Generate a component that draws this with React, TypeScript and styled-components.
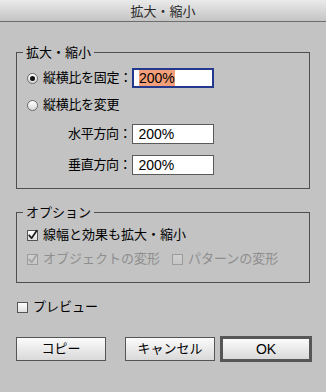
import React from "react";
import styled, { createGlobalStyle } from "styled-components";

const Global = createGlobalStyle`
  html, body { margin: 0; padding: 0; background: #ffffff; }
  body { font-family: "Liberation Sans", "Noto Sans CJK JP", sans-serif; }
`;

const BG = "#c3c3c3";

const Window = styled.div`
  width: 326px;
  height: 392px;
  background: ${BG};
  display: flex;
  flex-direction: column;
  overflow: hidden;
  font-size: 13px;
  color: #000;
`;

const TitleBar = styled.div`
  height: 21px;
  border-bottom: 1px solid #6e6e6e;
  background: linear-gradient(#eaeaea, #c4c4c4);
  display: flex;
  align-items: center;
  justify-content: center;
  font-family: "Noto Sans CJK JP", sans-serif;
  font-size: 13px;
  line-height: 21px;
  color: #2a2a2a;
`;

const Body = styled.div`
  padding: 30px 16px 0 16px;
  display: flex;
  flex-direction: column;
`;

const Group = styled.div<{ $mt?: number; $pt: number; $pb: number }>`
  position: relative;
  margin-top: ${(p) => p.$mt ?? 0}px;
  border: 1px solid #4f4f4f;
  padding: ${(p) => p.$pt}px 0 ${(p) => p.$pb}px 10px;
  display: flex;
  flex-direction: column;
`;

const Legend = styled.span`
  position: absolute;
  top: -10px;
  left: 6px;
  padding: 0 3px;
  background: ${BG};
  font-family: "Noto Sans CJK JP", sans-serif;
  font-size: 13px;
  line-height: 18px;
`;

const Row = styled.div<{ $mt?: number; $indent?: number; $h?: number; $gap?: number }>`
  display: flex;
  align-items: center;
  height: ${(p) => p.$h ?? 20}px;
  margin-top: ${(p) => p.$mt ?? 0}px;
  padding-left: ${(p) => p.$indent ?? 0}px;
  gap: ${(p) => p.$gap ?? 0}px;
`;

const Item = styled.label<{ $disabled?: boolean }>`
  display: flex;
  align-items: center;
  gap: 5px;
  color: ${(p) => (p.$disabled ? "#8e8e8e" : "#000")};
  font-size: 13px;
  line-height: 18px;
  white-space: nowrap;
`;

const Label = styled.span`
  font-size: 13px;
  line-height: 18px;
  letter-spacing: -0.3px;
  white-space: nowrap;
`;

const Radio = styled.span`
  width: 9px;
  height: 9px;
  border-radius: 50%;
  border: 1px solid #6a6a6a;
  background: linear-gradient(#ffffff, #d9d9d9);
  display: flex;
  align-items: center;
  justify-content: center;
  flex: none;
`;

const Dot = styled.span`
  width: 5px;
  height: 5px;
  border-radius: 50%;
  background: #111;
`;

const Field = styled.div<{ $focused?: boolean }>`
  box-sizing: border-box;
  width: 82px;
  height: 20px;
  background: #fff;
  border: ${(p) => (p.$focused ? "2px solid #24398e" : "1px solid #5a5a5a")};
  padding-left: ${(p) => (p.$focused ? 5 : 6)}px;
  display: flex;
  align-items: center;
  font-family: "Liberation Sans", sans-serif;
  font-size: 14px;
  line-height: 16px;
`;

const Selected = styled.span`
  background: #f39f7a;
`;

const BoxSvg = styled.svg`
  flex: none;
  overflow: visible;
`;

const CheckBox: React.FC<{ checked?: boolean; disabled?: boolean }> = ({ checked, disabled }) => {
  const c = disabled ? "#a2a2a2" : "#1a1a1a";
  const b = disabled ? "#9c9c9c" : "#555555";
  return (
    <BoxSvg width="11" height="11" viewBox="0 0 11 11">
      <defs>
        <linearGradient id={disabled ? "cbd" : "cb"} x1="0" y1="0" x2="0" y2="1">
          <stop offset="0" stopColor={disabled ? "#d0d0d0" : "#ffffff"} />
          <stop offset="1" stopColor={disabled ? "#c6c6c6" : "#dedede"} />
        </linearGradient>
      </defs>
      <rect x="0.5" y="0.5" width="10" height="10" fill={`url(#${disabled ? "cbd" : "cb"})`} stroke={b} />
      {checked && (
        <path d="M2.2 5.4 L4.6 8.2 L9.8 0.6" fill="none" stroke={c} strokeWidth="1.7" strokeLinecap="round" strokeLinejoin="round" />
      )}
    </BoxSvg>
  );
};

const ButtonRow = styled.div`
  display: flex;
  align-items: center;
  margin-top: 20px;
  margin-right: -2px;
  gap: 5px;
`;

const Button = styled.button<{ $primary?: boolean; $push?: boolean }>`
  box-sizing: border-box;
  width: ${(p) => (p.$primary ? 92 : 90)}px;
  height: ${(p) => (p.$primary ? 26 : 24)}px;
  margin-left: ${(p) => (p.$push ? "auto" : "0")};
  border: ${(p) => (p.$primary ? "3px solid #565656" : "1px solid #555555")};
  background: linear-gradient(#fbfbfb, #d9d9d9);
  border-radius: 0;
  padding: 0;
  font-family: "Liberation Sans", "Noto Sans CJK JP", sans-serif;
  font-size: ${(p) => (p.$primary ? 14 : 13)}px;
  line-height: 18px;
  color: #000;
  display: flex;
  align-items: center;
  justify-content: center;
`;

export default function App() {
  return (
    <>
      <Global />
      <Window>
        <TitleBar>拡大・縮小</TitleBar>
        <Body>
          <Group $pt={15} $pb={13}>
            <Legend>拡大・縮小</Legend>
            <Row>
              <Item>
                <Radio>
                  <Dot />
                </Radio>
                <Label>縦横比を固定：</Label>
              </Item>
              <Field $focused>
                <Selected>200%</Selected>
              </Field>
            </Row>
            <Row $mt={7}>
              <Item>
                <Radio />
                <Label>縦横比を変更</Label>
              </Item>
            </Row>
            <Row $mt={9} $indent={41}>
              <Label>水平方向：</Label>
              <Field>200%</Field>
            </Row>
            <Row $mt={11} $indent={41}>
              <Label>垂直方向：</Label>
              <Field>200%</Field>
            </Row>
          </Group>

          <Group $mt={23} $pt={13} $pb={14}>
            <Legend>オプション</Legend>
            <Row $h={18}>
              <Item>
                <CheckBox checked />
                <span>線幅と効果も拡大・縮小</span>
              </Item>
            </Row>
            <Row $h={18} $mt={6} $gap={12}>
              <Item $disabled>
                <CheckBox checked disabled />
                <span>オブジェクトの変形</span>
              </Item>
              <Item $disabled>
                <CheckBox disabled />
                <span>パターンの変形</span>
              </Item>
            </Row>
          </Group>

          <Row $h={18} $mt={15} $indent={1}>
            <Item>
              <CheckBox />
              <span>プレビュー</span>
            </Item>
          </Row>

          <ButtonRow>
            <Button>コピー</Button>
            <Button $push>キャンセル</Button>
            <Button $primary>OK</Button>
          </ButtonRow>
        </Body>
      </Window>
    </>
  );
}
